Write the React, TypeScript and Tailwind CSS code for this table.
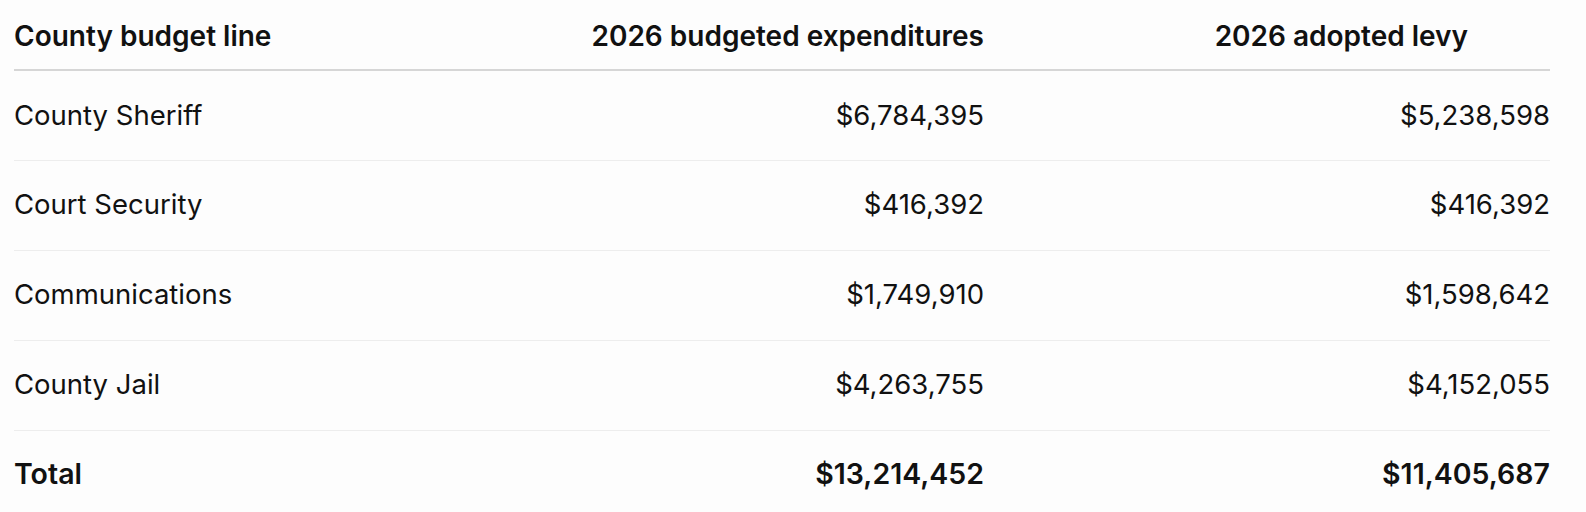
const rows = [
  { name: 'County Sheriff', spent: '$6,784,395', levy: '$5,238,598' },
  { name: 'Court Security', spent: '$416,392', levy: '$416,392' },
  { name: 'Communications', spent: '$1,749,910', levy: '$1,598,642' },
  { name: 'County Jail', spent: '$4,263,755', levy: '$4,152,055' },
]

export default function App() {
  return (
    <div className="h-[512px] w-full overflow-hidden bg-[#fdfdfd] pl-[14px] text-[#111111] [font-family:Inter,'Noto_Sans',sans-serif]">
      <table className="w-[1536px] table-fixed border-collapse text-[27.5px] leading-none">
        <colgroup>
          <col className="w-[520px]" />
          <col className="w-[450px]" />
          <col className="w-[566px]" />
        </colgroup>
        <thead>
          <tr className="h-[70px] border-b-2 border-[#d6d6d6] text-[28px]">
            <th className="pt-[2px] text-left font-semibold">County budget line</th>
            <th className="pt-[2px] text-right font-semibold">2026 budgeted expenditures</th>
            <th className="pt-[2px] pr-[82px] text-right font-semibold">2026 adopted levy</th>
          </tr>
        </thead>
        <tbody>
          {rows.map((r) => (
            <tr key={r.name} className="h-[90px] border-b border-[#ededed]">
              <td>{r.name}</td>
              <td className="text-right">{r.spent}</td>
              <td className="text-right">{r.levy}</td>
            </tr>
          ))}
          <tr className="h-[88px] text-[28.5px] font-semibold">
            <td>Total</td>
            <td className="text-right">$13,214,452</td>
            <td className="text-right">$11,405,687</td>
          </tr>
        </tbody>
      </table>
    </div>
  )
}
